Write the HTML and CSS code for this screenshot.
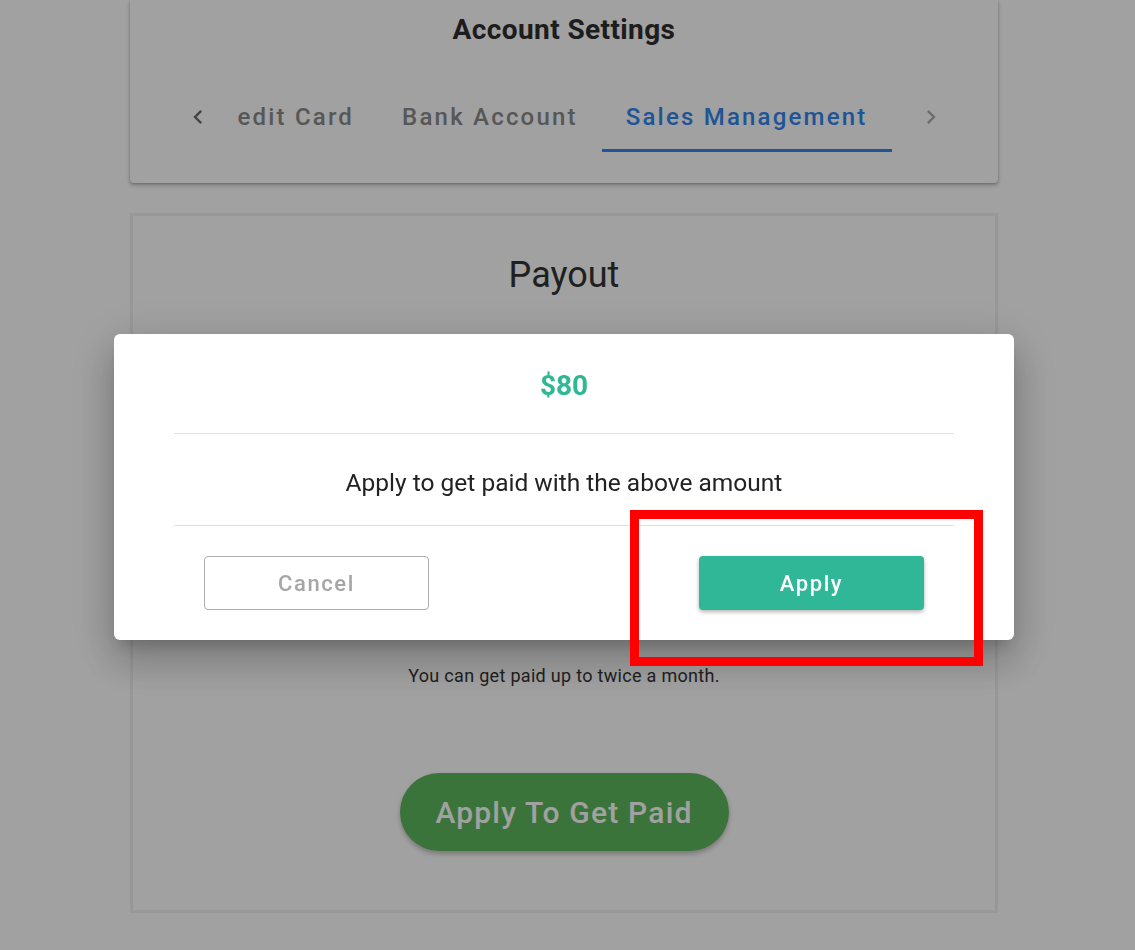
FILE: index.html
```html
<!DOCTYPE html>
<html lang="en">
<head>
<meta charset="utf-8">
<title>Account Settings</title>
<link rel="stylesheet" href="styles.css">
</head>
<body>
<div class="page">
  <section class="settings-card">
    <h1 class="settings-title">Account Settings</h1>
    <div class="tabs">
      <button class="tab-arrow tab-arrow-left" aria-label="Scroll left">
        <svg viewBox="0 0 24 24" width="28" height="28"><path d="M15.41 16.59L10.83 12l4.58-4.59L14 6l-6 6 6 6 1.41-1.41z"/></svg>
      </button>
      <div class="tab-scroller">
        <div class="tab-track">
          <span class="tab">Credit Card</span>
          <span class="tab">Bank Account</span>
          <span class="tab tab-active">Sales Management</span>
        </div>
      </div>
      <button class="tab-arrow tab-arrow-right" aria-label="Scroll right">
        <svg viewBox="0 0 24 24" width="28" height="28"><path d="M8.59 16.59L13.17 12 8.59 7.41 10 6l6 6-6 6-1.41-1.41z"/></svg>
      </button>
    </div>
  </section>

  <section class="payout-card">
    <h2 class="payout-title">Payout</h2>
    <p class="payout-note">You can get paid up to twice a month.</p>
    <button class="payout-button">Apply To Get Paid</button>
  </section>
</div>

<div class="overlay">
  <div class="dialog">
    <div class="dialog-amount">$80</div>
    <div class="dialog-body">Apply to get paid with the above amount</div>
    <div class="dialog-actions">
      <button class="btn-cancel">Cancel</button>
      <button class="btn-apply">Apply</button>
    </div>
  </div>
</div>

<div class="highlight"></div>
</body>
</html>
```

FILE: styles.css
```css
* { box-sizing: border-box; }

html, body {
  margin: 0;
  padding: 0;
  background: #ffffff;
  font-family: Roboto, "Liberation Sans", sans-serif;
  color: #222;
  overflow: hidden;
}

.page {
  width: 1128px;
  height: 950px;
  display: flex;
  flex-direction: column;
  align-items: center;
}

.settings-card {
  width: 868px;
  background: #fff;
  border-radius: 0 0 4px 4px;
  box-shadow: 0 2px 4px rgba(0,0,0,0.28), 0 1px 2px rgba(0,0,0,0.12);
  padding: 15px 0 31px;
  display: flex;
  flex-direction: column;
  align-items: center;
}

.settings-title {
  margin: 0;
  font-size: 28px;
  line-height: 30px;
  font-weight: 700;
  letter-spacing: 0.4px;
  color: #2e2e2e;
}

.tabs {
  margin-top: 37px;
  display: flex;
  align-items: stretch;
  gap: 19px;
  height: 70px;
}

.tab-arrow {
  width: 40px;
  border: 0;
  background: none;
  padding: 0;
  display: flex;
  align-items: center;
  justify-content: center;
}
.tab-arrow-left svg { fill: #6a6a6a; }
.tab-arrow-right svg { fill: #adadad; }

.tab-scroller {
  width: 655px;
  overflow: hidden;
  display: flex;
  justify-content: flex-end;
}

.tab-track {
  display: flex;
  flex-shrink: 0;
}

.tab {
  flex-shrink: 0;
  padding: 3px 24px 0;
  display: flex;
  align-items: center;
  font-size: 24px;
  font-weight: 500;
  letter-spacing: 2.2px;
  color: #8a8a8a;
  border-bottom: 3px solid transparent;
}

.tab-active {
  color: #3185ee;
  border-bottom-color: #3185ee;
}

.payout-card {
  margin-top: 30px;
  width: 868px;
  background: #fff;
  border: 3px solid #f1f1f1;
  padding: 39px 0 59px;
  display: flex;
  flex-direction: column;
  align-items: center;
}

.payout-title {
  margin: 0;
  font-size: 36px;
  line-height: 40px;
  font-weight: 400;
  color: #333;
}

.payout-note {
  margin: 369px 0 0;
  font-size: 18px;
  line-height: 24px;
  letter-spacing: 0.3px;
  color: #333;
}

.payout-button {
  margin-top: 85px;
  width: 329px;
  height: 78px;
  border: 0;
  border-radius: 39px;
  background: #5cb85c;
  color: #fff;
  font-family: Roboto, "Liberation Sans", sans-serif;
  font-size: 30px;
  font-weight: 500;
  letter-spacing: 1.2px;
  box-shadow: 0 3px 5px rgba(0,0,0,0.25);
}

.overlay {
  position: fixed;
  inset: 0;
  background: rgba(0,0,0,0.37);
  display: flex;
  justify-content: center;
  align-items: center;
  padding: 24px 7px 0 0;
}

.dialog {
  width: 900px;
  background: #fff;
  border-radius: 6px;
  padding: 0 60px;
  box-shadow: 0 11px 15px -7px rgba(0,0,0,0.2), 0 24px 38px 3px rgba(0,0,0,0.14), 0 9px 46px 8px rgba(0,0,0,0.12);
}

.dialog-amount {
  padding: 35px 0 30px;
  text-align: center;
  font-size: 28px;
  line-height: 34px;
  font-weight: 700;
  color: #2fb895;
  border-bottom: 1px solid #e0e0e0;
}

.dialog-body {
  padding: 34px 0 27px;
  text-align: center;
  font-size: 24.5px;
  line-height: 30px;
  color: #222;
  border-bottom: 1px solid #e0e0e0;
}

.dialog-actions {
  padding: 30px 30px;
  display: flex;
  justify-content: space-between;
}

.btn-cancel, .btn-apply {
  width: 225px;
  height: 54px;
  border-radius: 4px;
  font-family: Roboto, "Liberation Sans", sans-serif;
  font-size: 22px;
  font-weight: 500;
  letter-spacing: 1.6px;
}

.btn-cancel {
  background: #fff;
  border: 1px solid #adadad;
  color: #a6a6a6;
}

.btn-apply {
  background: #30b797;
  border: 0;
  color: #fff;
  box-shadow: 0 2px 4px rgba(0,0,0,0.3);
}

.highlight {
  position: absolute;
  left: 630px;
  top: 510px;
  width: 353px;
  height: 156px;
  border: 9px solid #ff0000;
}
```
